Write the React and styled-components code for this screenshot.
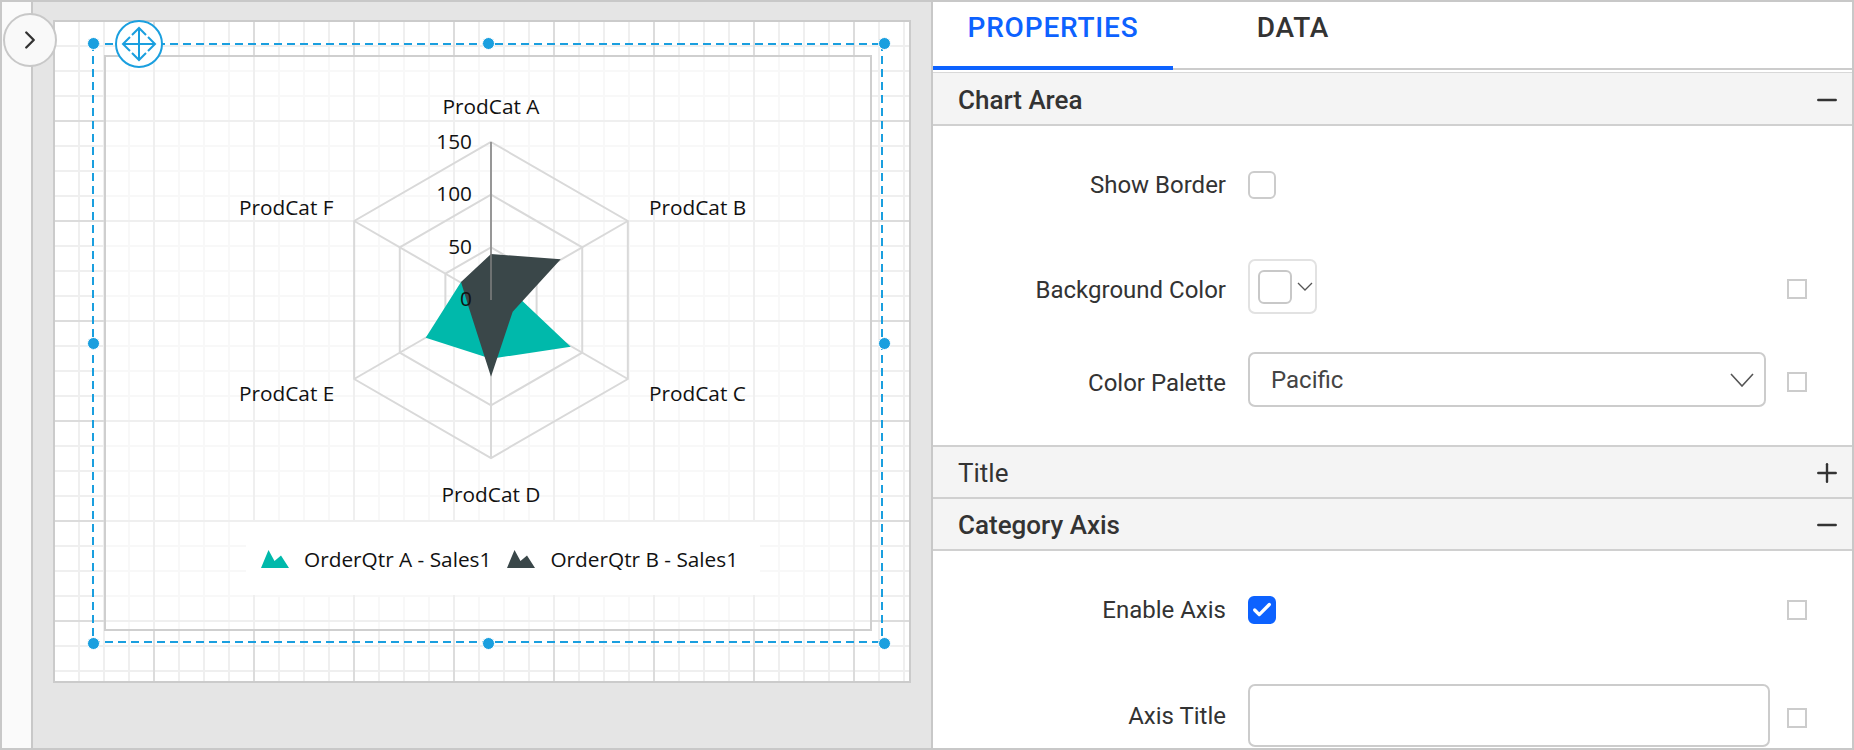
import React from "react";
import styled, { createGlobalStyle } from "styled-components";
import { ChevronRight, Plus, Minus, Check } from "lucide-react";

const Global = createGlobalStyle`
  html, body {
    margin: 0;
    padding: 0;
    background: #fff;
  }
  * {
    box-sizing: border-box;
  }
`;

const BLUE = "#1a9fdf";
const center = { x: 491, y: 300 };
const radius = 158;

const spoke = [0, 1, 2, 3, 4, 5].map((i) => {
  const a = (i * Math.PI) / 3;
  return [Math.sin(a), -Math.cos(a)];
});
const ring = (r) =>
  spoke.map(([x, y]) => `${center.x + x * r},${center.y + y * r}`).join(" ");

const seriesA = "491,270 509.7,289 570.7,346.7 491,358.7 425.7,337.7 461,282";
const seriesB = "491,254 560.7,259.3 512.7,311.7 491,376.7 467.7,304 461,282";

const axisTicks = [
  { label: "150", y: 149 },
  { label: "100", y: 201 },
  { label: "50", y: 254 },
  { label: "0", y: 306 },
];

const catLabels = [
  { label: "ProdCat A", x: 491, y: 114, anchor: "middle" },
  { label: "ProdCat B", x: 649, y: 215, anchor: "start" },
  { label: "ProdCat C", x: 649, y: 401, anchor: "start" },
  { label: "ProdCat D", x: 491, y: 502, anchor: "middle" },
  { label: "ProdCat E", x: 239, y: 401, anchor: "start" },
  { label: "ProdCat F", x: 239, y: 215, anchor: "start" },
];

const handles = [
  ["0%", "0%"],
  ["50%", "0%"],
  ["100%", "0%"],
  ["0%", "50%"],
  ["100%", "50%"],
  ["0%", "100%"],
  ["50%", "100%"],
  ["100%", "100%"],
];

function MoveIcon() {
  return (
    <svg width="40" height="40" viewBox="0 0 40 40" fill="none" stroke={BLUE} strokeWidth="2">
      <path d="M20 4V36M4 20H36" />
      <path d="M13 11L20 4L27 11M13 29L20 36L27 29M11 13L4 20L11 27M29 13L36 20L29 27" />
    </svg>
  );
}

function RadarChart() {
  return (
    <ChartSvg viewBox="106 57 764 465">
      <g fill="none" stroke="#d9d9d9" strokeWidth="2">
        <polygon points={ring(radius)} />
        <polygon points={ring((radius * 2) / 3)} />
        <polygon points={ring(radius / 3)} />
        {spoke.map(([x, y], i) => (
          <line key={i} x1={center.x} y1={center.y} x2={center.x + x * radius} y2={center.y + y * radius} />
        ))}
      </g>
      <polygon points={seriesA} fill="#00b9ab" />
      <polygon points={seriesB} fill="#3a4749" />
      <line x1={center.x} y1={center.y} x2={center.x} y2={center.y - radius} stroke="#808080" strokeWidth="1.5" />
      {axisTicks.map((t) => (
        <ChartText key={t.label} x="472" y={t.y} textAnchor="end">
          {t.label}
        </ChartText>
      ))}
      {catLabels.map((c) => (
        <ChartText key={c.label} x={c.x} y={c.y} textAnchor={c.anchor}>
          {c.label}
        </ChartText>
      ))}
    </ChartSvg>
  );
}

function LegendMark({ color }) {
  return (
    <svg width="28" height="18" viewBox="0 0 28 18">
      <path d="M0 18L7.5 0L13.5 11L20 5.5L28 18Z" fill={color} />
    </svg>
  );
}

function Caret({ width, height, stroke }) {
  return (
    <svg width={width} height={height} viewBox={`0 0 ${width} ${height}`} fill="none" stroke="#555" strokeWidth={stroke}>
      <path d={`M1 1L${width / 2} ${height - 1}L${width - 1} 1`} />
    </svg>
  );
}

function Row({ label, top, height, shift = 0, bindShift = 0, children, bound }) {
  return (
    <PropRow $top={top} $height={height}>
      <PropLabel $shift={shift}>{label}</PropLabel>
      <div>{children}</div>
      {bound && <BindBox $shift={bindShift} />}
    </PropRow>
  );
}

export default function App() {
  return (
    <Shell>
      <Global />
      <Rail />
      <ToggleButton>
        <ChevronRight size={30} strokeWidth={1.9} />
      </ToggleButton>
      <Workspace>
        <Canvas>
          <Report>
            <RadarChart />
            <Legend>
              <LegendItem>
                <LegendMark color="#00b9ab" />
                OrderQtr A - Sales1
              </LegendItem>
              <LegendItem>
                <LegendMark color="#3a4749" />
                OrderQtr B - Sales1
              </LegendItem>
            </Legend>
            <Selection>
              {handles.map(([x, y]) => (
                <Handle key={x + y} $x={x} $y={y} />
              ))}
              <MoveHandle>
                <MoveIcon />
              </MoveHandle>
            </Selection>
          </Report>
        </Canvas>
      </Workspace>
      <Panel>
        <Tabs>
          <Tab $active>PROPERTIES</Tab>
          <Tab>DATA</Tab>
        </Tabs>
        <SectionHeader $first $bold>
          Chart Area
          <Minus size={30} strokeWidth={1.9} />
        </SectionHeader>
        <SectionBody $height={321}>
          <Row label="Show Border" top={31} height={56}>
            <CheckBox />
          </Row>
          <Row label="Background Color" top={46} height={55} shift={3} bindShift={2} bound>
            <ColorPicker>
              <Swatch />
              <Caret width={16} height={9} stroke={1.3} />
            </ColorPicker>
          </Row>
          <Row label="Color Palette" top={38} height={55} shift={3} bindShift={2} bound>
            <Select>
              Pacific
              <Caret width={24} height={14} stroke={1.6} />
            </Select>
          </Row>
        </SectionBody>
        <SectionHeader>
          Title
          <Plus size={30} strokeWidth={1.9} />
        </SectionHeader>
        <SectionHeader $bold>
          Category Axis
          <Minus size={30} strokeWidth={1.9} />
        </SectionHeader>
        <SectionBody>
          <Row label="Enable Axis" top={45} height={28} bound>
            <CheckBox $checked>
              <Check size={22} strokeWidth={3.6} color="#fff" />
            </CheckBox>
          </Row>
          <Row label="Axis Title" top={60} height={63} bindShift={2} bound>
            <TextBox />
          </Row>
        </SectionBody>
      </Panel>
    </Shell>
  );
}

const Shell = styled.div`
  position: relative;
  display: flex;
  width: 1854px;
  height: 750px;
  border: 2px solid #c8c8c8;
  overflow: hidden;
  background: #fff;
`;

const Rail = styled.div`
  flex: 0 0 31px;
  background: #fafafa;
  border-right: 2px solid #c8c8c8;
`;

const ToggleButton = styled.div`
  position: absolute;
  left: 1px;
  top: 11px;
  width: 54px;
  height: 54px;
  border-radius: 50%;
  border: 2px solid #c8c8c8;
  background: #f9f9f9;
  color: #333;
  display: flex;
  align-items: center;
  justify-content: center;
  z-index: 3;
`;

const Workspace = styled.div`
  flex: 0 0 898px;
  background: #e5e5e5;
  padding: 18px 0 0 20px;
`;

const Canvas = styled.div`
  width: 858px;
  height: 663px;
  padding: 33px 0 0 49px;
  border: 2px solid #cbcbcb;
  background-color: #fff;
  background-origin: border-box;
  background-image: linear-gradient(to right, #dcdcdc 2px, transparent 2px),
    linear-gradient(to bottom, #dcdcdc 2px, transparent 2px),
    linear-gradient(to right, #efefef 2px, transparent 2px),
    linear-gradient(to bottom, #efefef 2px, transparent 2px);
  background-size: 100px 100px, 100px 100px, 25px 25px, 25px 25px;
`;

const Report = styled.div`
  position: relative;
  width: 768px;
  height: 576px;
  border: 2px solid #cfcfcf;
  background: rgba(255, 255, 255, 0.55);
`;

const ChartSvg = styled.svg`
  display: block;
  width: 764px;
  height: 465px;
`;

const ChartText = styled.text`
  font-family: "Open Sans", sans-serif;
  font-size: 20.8px;
  fill: #111;
`;

const Legend = styled.div`
  display: flex;
  align-items: center;
  gap: 16px;
  width: 514px;
  height: 73px;
  margin-left: 140px;
  padding-left: 15px;
  background: #fff;
  font-family: "Open Sans", sans-serif;
  font-size: 20.8px;
  color: #111;
`;

const LegendItem = styled.div`
  display: flex;
  align-items: center;
  gap: 15px;
  white-space: nowrap;
`;

const Selection = styled.div`
  position: absolute;
  left: -14px;
  top: -14px;
  width: 791px;
  height: 600px;
  background-image: repeating-linear-gradient(to right, ${BLUE} 0 8px, transparent 8px 13px),
    repeating-linear-gradient(to right, ${BLUE} 0 8px, transparent 8px 13px),
    repeating-linear-gradient(to bottom, ${BLUE} 0 8px, transparent 8px 13px),
    repeating-linear-gradient(to bottom, ${BLUE} 0 8px, transparent 8px 13px);
  background-size: 100% 2px, 100% 2px, 2px 100%, 2px 100%;
  background-position: 0 0, 0 100%, 0 0, 100% 0;
  background-repeat: no-repeat;
`;

const Handle = styled.span`
  position: absolute;
  left: ${(p) => p.$x};
  top: ${(p) => p.$y};
  width: 13px;
  height: 13px;
  margin: -6px 0 0 -5.5px;
  border-radius: 50%;
  background: ${BLUE};
  border: 1px solid #fff;
`;

const MoveHandle = styled.div`
  position: absolute;
  left: 23px;
  top: -23px;
  width: 48px;
  height: 48px;
  border-radius: 50%;
  border: 2px solid ${BLUE};
  background: #fff;
  display: flex;
  align-items: center;
  justify-content: center;
`;

const Panel = styled.div`
  flex: 1;
  min-width: 0;
  border-left: 2px solid #c8c8c8;
  font-family: Roboto, sans-serif;
  color: #333;
  overflow: hidden;
`;

const Tabs = styled.div`
  display: flex;
  height: 68px;
  border-bottom: 2px solid #ccc;
`;

const Tab = styled.div`
  width: 240px;
  height: 68px;
  padding-top: 10px;
  text-align: center;
  font-size: 28px;
  line-height: 32px;
  font-weight: 500;
  letter-spacing: 0.8px;
  color: ${(p) => (p.$active ? "#0d62ff" : "#333")};
  border-bottom: ${(p) => (p.$active ? "4px solid #0d62ff" : "0")};
`;

const SectionHeader = styled.div`
  display: flex;
  align-items: center;
  justify-content: space-between;
  height: ${(p) => (p.$first ? "54px" : "52px")};
  margin-top: ${(p) => (p.$first ? "2px" : "0")};
  padding: 2px 10px 0 25px;
  background: #f4f4f4;
  border-top: ${(p) => (p.$first ? "1px solid #d8d8d8" : "0")};
  border-bottom: 2px solid #d0d0d0;
  font-size: 26px;
  font-weight: ${(p) => (p.$bold ? 500 : 400)};
`;

const SectionBody = styled.div`
  display: flow-root;
  height: ${(p) => (p.$height ? `${p.$height}px` : "auto")};
  border-bottom: ${(p) => (p.$height ? "2px solid #d0d0d0" : "0")};
`;

const PropRow = styled.div`
  display: grid;
  grid-template-columns: 315px 539px 20px;
  align-items: center;
  height: ${(p) => p.$height}px;
  margin-top: ${(p) => p.$top}px;
`;

const PropLabel = styled.div`
  margin-top: ${(p) => p.$shift * 2}px;
  padding-right: 22px;
  text-align: right;
  font-size: 24px;
  white-space: nowrap;
`;

const CheckBox = styled.div`
  width: 28px;
  height: 28px;
  border-radius: 6px;
  border: 2px solid ${(p) => (p.$checked ? "#0d62ff" : "#ccc")};
  background: ${(p) => (p.$checked ? "#0d62ff" : "#fff")};
  display: flex;
  align-items: center;
  justify-content: center;
`;

const BindBox = styled.div`
  width: 20px;
  height: 20px;
  margin-top: ${(p) => p.$shift * 2}px;
  border: 2px solid #ccc;
`;

const ColorPicker = styled.div`
  display: flex;
  align-items: center;
  gap: 5px;
  width: 69px;
  height: 55px;
  padding-left: 8px;
  border: 2px solid #e2e2e2;
  border-radius: 7px;
`;

const Swatch = styled.div`
  flex: none;
  width: 34px;
  height: 34px;
  border: 2px solid #c8c8c8;
  border-radius: 6px;
`;

const Select = styled.div`
  display: flex;
  align-items: center;
  justify-content: space-between;
  width: 518px;
  height: 55px;
  padding: 0 10px 0 21px;
  border: 2px solid #ccc;
  border-radius: 7px;
  font-size: 24px;
  color: #444;
`;

const TextBox = styled.div`
  width: 522px;
  height: 63px;
  border: 2px solid #ccc;
  border-radius: 7px;
`;
